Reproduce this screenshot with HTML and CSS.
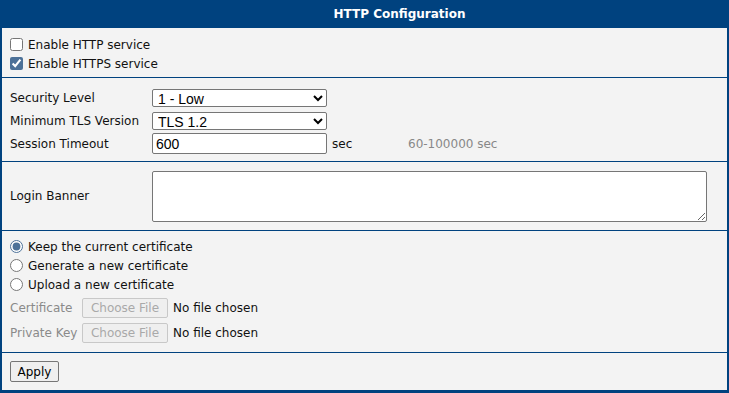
FILE: index.html
```html
<!DOCTYPE html>
<html lang="en">
<head>
    <meta charset="UTF-8">
    <meta name="viewport" content="width=device-width, initial-scale=1.0">
    <title>HTTP Configuration</title>
    <link rel="stylesheet" href="styles.css">
</head>
<body>
    <div class="panel">
        <div class="panel-title">HTTP Configuration</div>

        <div class="section section-services">
            <label class="check-row"><input type="checkbox"> Enable HTTP service</label>
            <label class="check-row"><input type="checkbox" checked> Enable HTTPS service</label>
        </div>

        <div class="section section-params">
            <div class="form-row">
                <span class="form-label">Security Level</span>
                <select class="form-select">
                    <option>1 - Low</option>
                    <option>2 - Medium</option>
                    <option>3 - High</option>
                </select>
            </div>
            <div class="form-row">
                <span class="form-label">Minimum TLS Version</span>
                <select class="form-select">
                    <option>TLS 1.2</option>
                    <option>TLS 1.3</option>
                </select>
            </div>
            <div class="form-row">
                <span class="form-label">Session Timeout</span>
                <input class="form-input" type="text" value="600">
                <span class="unit">sec</span>
                <span class="hint">60-100000 sec</span>
            </div>
        </div>

        <div class="section section-banner">
            <span class="form-label">Login Banner</span>
            <textarea class="form-textarea"></textarea>
        </div>

        <div class="section section-cert">
            <label class="check-row"><input type="radio" name="cert" checked> Keep the current certificate</label>
            <label class="check-row"><input type="radio" name="cert"> Generate a new certificate</label>
            <label class="check-row"><input type="radio" name="cert"> Upload a new certificate</label>
            <div class="file-row">
                <span class="file-label">Certificate</span>
                <input class="file-input" type="file" disabled>
            </div>
            <div class="file-row">
                <span class="file-label">Private Key</span>
                <input class="file-input" type="file" disabled>
            </div>
        </div>

        <div class="section section-actions">
            <button class="btn-apply" type="button">Apply</button>
        </div>
    </div>
</body>
</html>
```

FILE: styles.css
```css
body {
    margin: 0;
    font-family: "DejaVu Sans", Verdana, sans-serif;
    font-size: 12px;
    color: #111;
    background: #fff;
}

.panel {
    width: 729px;
    height: 393px;
    box-sizing: border-box;
    background: #f3f3f3;
    border: 2px solid #00427f;
    border-top: none;
    border-bottom-width: 3px;
    display: flex;
    flex-direction: column;
}

.panel-title {
    background: #00427f;
    color: #fff;
    font-weight: bold;
    font-size: 12px;
    text-align: center;
    height: 27px;
    line-height: 29px;
    margin: 0 -2px;
    padding-left: 70px;
}

.section {
    border-top: 1px solid #00427f;
    padding: 0 8px;
}

.section:first-of-type {
    border-top: none;
}

.section-services {
    height: 50px;
    padding-top: 7px;
    box-sizing: border-box;
}

.check-row {
    display: flex;
    align-items: center;
    height: 19px;
}

.check-row input {
    margin: 0 5px 0 0;
    width: 13px;
    height: 13px;
    accent-color: #4c7198;
}

.section-params {
    height: 84px;
    padding-top: 8px;
    box-sizing: border-box;
}

.form-row {
    display: flex;
    align-items: center;
    height: 23px;
}

.form-label {
    width: 142px;
    flex-shrink: 0;
}

.form-select {
    width: 175px;
    height: 18px;
    font-family: "Liberation Sans", Arial, sans-serif;
    font-size: 14px;
    padding: 0 0 0 1px;
    border: 1px solid #767676;
    border-radius: 2px;
    background: #fff;
    color: #000;
}

.form-input {
    width: 175px;
    height: 21px;
    box-sizing: border-box;
    font-family: "Liberation Sans", Arial, sans-serif;
    font-size: 14px;
    padding: 0 3px;
    border: 1px solid #767676;
    border-radius: 2px;
    margin: 0;
}

.unit {
    margin-left: 5px;
    width: 76px;
}

.hint {
    color: #888;
}

.section-banner {
    height: 69px;
    display: flex;
    align-items: center;
    box-sizing: border-box;
}

.form-textarea {
    width: 555px;
    height: 51px;
    box-sizing: border-box;
    margin: 0;
    border: 1px solid #767676;
    border-radius: 2px;
    background: #fff;
}

.section-cert {
    height: 122px;
    padding-top: 6px;
    box-sizing: border-box;
}

.file-row {
    display: flex;
    align-items: center;
    height: 25px;
}

.file-row:first-of-type {
    margin-top: 1px;
}

.file-label {
    width: 72px;
    color: #8a8a8a;
}

.file-input {
    font-family: "DejaVu Sans", Verdana, sans-serif;
    font-size: 12px;
    color: #111;
    height: 20px;
}

.file-input::file-selector-button {
    font-family: "DejaVu Sans", Verdana, sans-serif;
    font-size: 12px;
    height: 20px;
    width: 86px;
    margin: 0 5px 0 0;
    color: #a9a9a9;
    background: #efefef;
    border: 1px solid #c8c8c8;
    border-radius: 2px;
}

.section-actions {
    flex: 1;
    display: flex;
    align-items: center;
}

.btn-apply {
    font-family: "DejaVu Sans", Verdana, sans-serif;
    font-size: 12px;
    width: 49px;
    height: 21px;
    padding: 0;
    color: #000;
    background: #efefef;
    border: 1px solid #767676;
    border-radius: 2px;
}
```
